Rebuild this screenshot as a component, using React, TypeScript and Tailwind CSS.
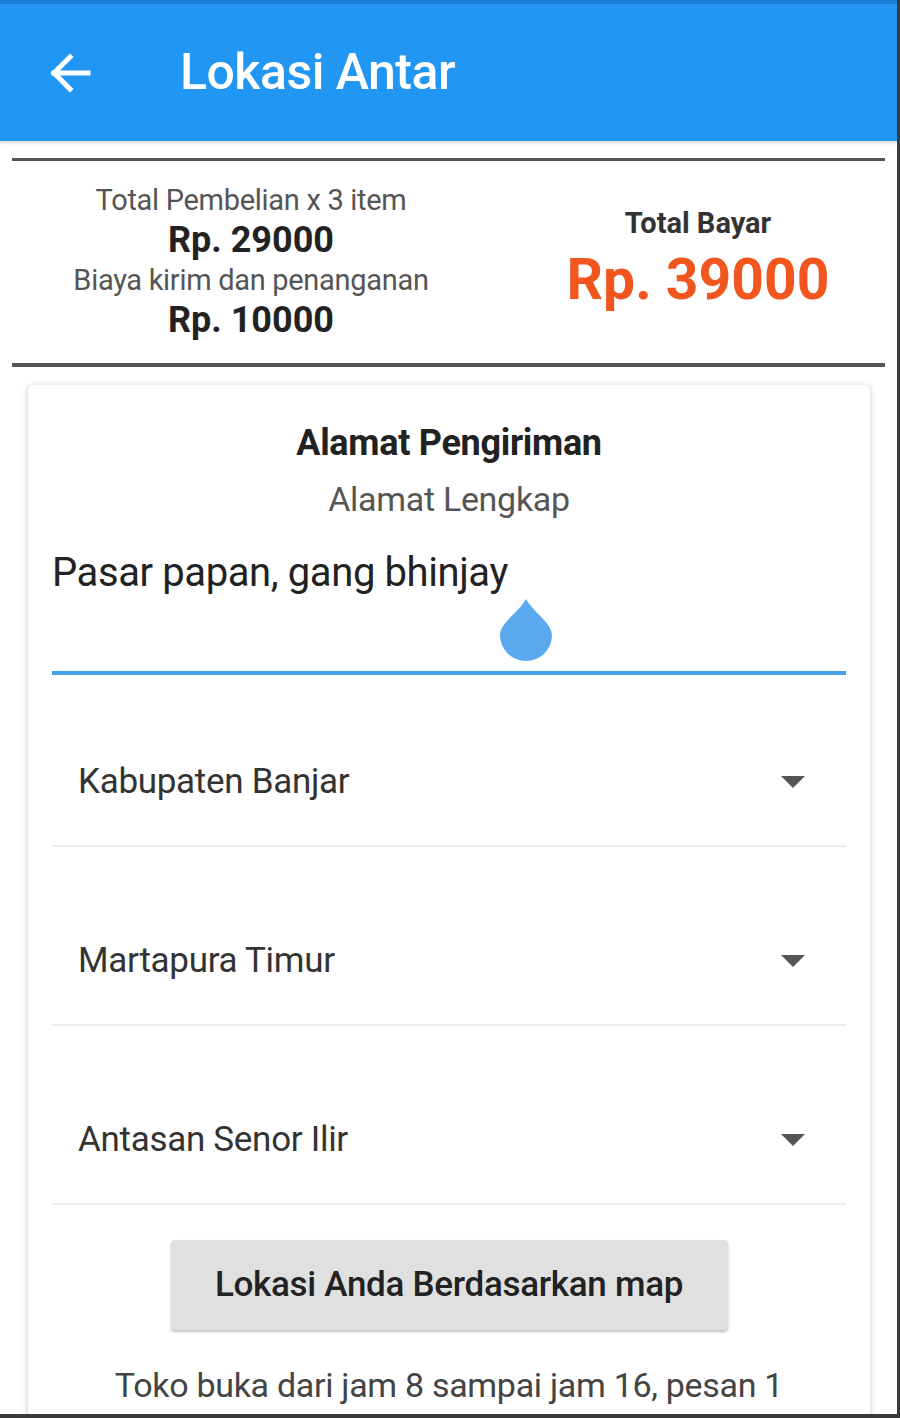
import React from 'react'

const ROBOTO = { fontFamily: 'Roboto, "Noto Sans", sans-serif' }

function BackArrow() {
  return (
    <svg width="44" height="40" viewBox="0 0 44 40" fill="none" stroke="white" strokeWidth="5" strokeLinecap="square">
      <path d="M6 20 H40" />
      <path d="M22 4 L6 20 L22 36" strokeLinejoin="miter" />
    </svg>
  )
}

function Caret() {
  return (
    <svg width="26" height="14" viewBox="0 0 26 14">
      <path d="M1 1 L25 1 L13 13 Z" fill="#555" />
    </svg>
  )
}

function Dropdown({ label }: { label: string }) {
  return (
    <div className="flex items-end h-[172px] border-b-2 border-[#ececec] pb-[39px]">
      <div className="flex items-center justify-between w-full pl-[26px] pr-[40px]">
        <span className="text-[35px] text-[#333] leading-[48px] tracking-[-0.3px]">{label}</span>
        <Caret />
      </div>
    </div>
  )
}

export default function App() {
  return (
    <div
      style={ROBOTO}
      className="w-[900px] h-[1418px] overflow-hidden bg-white border-r-[3px] border-b-[4px] border-[#3a3a3a] flex flex-col"
    >
      <header className="h-[141px] shrink-0 bg-[#2196f3] border-t-4 border-[#1b7fd9] flex items-center pl-[48px] shadow-[0_2px_3px_rgba(0,0,0,0.15)]">
        <BackArrow />
        <h1 className="ml-[88px] text-white text-[50px] font-medium tracking-[-0.5px]">Lokasi Antar</h1>
      </header>

      <section className="mx-[12px] mt-[17px] border-t-[3px] border-b-[4px] border-[#555] flex items-center pt-[19px] pb-[23px]">
        <div className="w-[478px] flex flex-col items-center text-center leading-[40px]">
          <span className="text-[29px] text-[#555] tracking-[-0.3px]">Total Pembelian x 3 item</span>
          <span className="text-[36px] font-bold text-[#222]">Rp. 29000</span>
          <span className="text-[29px] text-[#555] tracking-[-0.3px]">Biaya kirim dan penanganan</span>
          <span className="text-[36px] font-bold text-[#222]">Rp. 10000</span>
        </div>
        <div className="w-[374px] ml-auto flex flex-col items-center">
          <span className="text-[29px] font-bold text-[#333] leading-[36px]">Total Bayar</span>
          <span className="text-[57px] font-bold text-[#f2561f] leading-[70px] mt-[4px]">Rp. 39000</span>
        </div>
      </section>

      <div className="mx-[28px] mt-[18px] w-[842px] bg-white rounded-[6px] shadow-[0_1px_6px_rgba(0,0,0,0.22)] px-[24px] pt-[36px] flex-1">
        <div className="flex flex-col items-center">
          <span className="text-[36px] font-bold text-[#222] leading-[44px] tracking-[-0.3px]">Alamat Pengiriman</span>
          <span className="text-[34px] text-[#555] leading-[44px] mt-[12px] tracking-[-0.3px]">Alamat Lengkap</span>
        </div>
        <div className="relative mt-[28px] h-[126px] border-b-4 border-[#42a0ef]">
          <span className="block text-[40px] text-[#222] leading-[48px] tracking-[-0.4px]">Pasar papan, gang bhinjay</span>
          <svg className="absolute left-[446px] top-[48px]" width="56" height="66" viewBox="0 0 56 66">
            <path d="M28 2 C36 16 54 26 54 38 A26 26 0 0 1 2 38 C2 26 20 16 28 2 Z" fill="#5aa9ee" />
          </svg>
        </div>
        <div className="flex flex-col gap-[7px]">
          <Dropdown label="Kabupaten Banjar" />
          <Dropdown label="Martapura Timur" />
          <Dropdown label="Antasan Senor Ilir" />
        </div>
        <div className="flex justify-center mt-[35px]">
          <button className="w-[557px] h-[90px] bg-[#e0e0e0] rounded-[4px] shadow-[0_2px_3px_rgba(0,0,0,0.25)] text-[35px] font-medium text-[#222] tracking-[-0.3px]">
            Lokasi Anda Berdasarkan map
          </button>
        </div>
        <p className="mt-[33px] text-center text-[34px] text-[#444] leading-[44px] px-[40px] tracking-[-0.3px]">
          Toko buka dari jam 8 sampai jam 16, pesan 1 jam sebelum toko tutup untuk pengiriman hari ini
        </p>
      </div>
    </div>
  )
}
